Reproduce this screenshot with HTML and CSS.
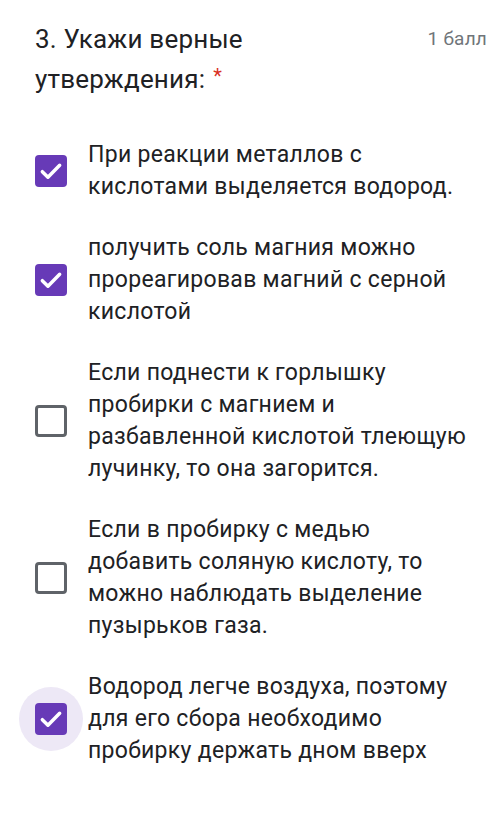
FILE: index.html
```html
<!DOCTYPE html>
<html lang="ru">
<head>
    <meta charset="UTF-8">
    <meta name="viewport" content="width=device-width, initial-scale=1.0">
    <title>Вопрос 3</title>
    <link rel="stylesheet" href="styles.css">
</head>
<body>
    <div class="question">
        <div class="question-head">
            <div class="question-title">3. Укажи верные утверждения:<span class="required">*</span></div>
            <div class="points">1 балл</div>
        </div>
        <div class="options">
            <label class="option">
                <span class="box checked">
                    <svg viewBox="0 0 24 24"><path d="M5.5 12.5l4.2 4.2 8.8-9"/></svg>
                </span>
                <span class="option-text">При реакции металлов с кислотами выделяется водород.</span>
            </label>
            <label class="option">
                <span class="box checked">
                    <svg viewBox="0 0 24 24"><path d="M5.5 12.5l4.2 4.2 8.8-9"/></svg>
                </span>
                <span class="option-text">получить соль магния можно прореагировав магний с серной кислотой</span>
            </label>
            <label class="option">
                <span class="box"></span>
                <span class="option-text">Если поднести к горлышку пробирки с магнием и разбавленной кислотой тлеющую лучинку, то она загорится.</span>
            </label>
            <label class="option">
                <span class="box"></span>
                <span class="option-text">Если в пробирку с медью добавить соляную кислоту, то можно наблюдать выделение пузырьков газа.</span>
            </label>
            <label class="option">
                <span class="box checked focused">
                    <svg viewBox="0 0 24 24"><path d="M5.5 12.5l4.2 4.2 8.8-9"/></svg>
                </span>
                <span class="option-text">Водород легче воздуха, поэтому для его сбора необходимо пробирку держать дном вверх</span>
            </label>
        </div>
    </div>
</body>
</html>
```

FILE: styles.css
```css
body {
    margin: 0;
    background-color: #fff;
    font-family: Roboto, "Noto Sans", Arial, sans-serif;
    color: #202124;
}
.question {
    padding: 19px 13px 40px 35px;
}
.question-head {
    display: flex;
    justify-content: space-between;
    align-items: flex-start;
    gap: 20px;
}
.question-title {
    font-size: 26px;
    line-height: 40px;
    letter-spacing: 0.2px;
    width: 260px;
}
.required {
    color: #d93025;
    font-size: 20px;
    line-height: 20px;
    margin-left: 8px;
    vertical-align: 5px;
}
.points {
    font-size: 19px;
    line-height: 40px;
    letter-spacing: 0.2px;
    color: #70757a;
    white-space: nowrap;
}
.options {
    display: flex;
    flex-direction: column;
    gap: 29px;
    margin-top: 40px;
    padding-right: 15px;
}
.option {
    display: flex;
    align-items: center;
    gap: 21px;
}
.option-text {
    font-size: 23px;
    line-height: 32px;
    letter-spacing: 0.3px;
    flex: 1;
}
.box {
    position: relative;
    flex: none;
    width: 32px;
    height: 32px;
    box-sizing: border-box;
    border: 3px solid #5f6368;
    border-radius: 4px;
}
.box.checked {
    border: none;
    background-color: #673ab7;
}
.box svg {
    position: relative;
    z-index: 1;
    display: block;
    width: 32px;
    height: 32px;
    fill: none;
    stroke: #fff;
    stroke-width: 2.6;
    stroke-linecap: round;
    stroke-linejoin: round;
}
.box.focused::before {
    content: "";
    position: absolute;
    left: -16px;
    top: -16px;
    width: 64px;
    height: 64px;
    border-radius: 50%;
    background-color: #ede8f6;
}
.box.focused::after {
    content: "";
    position: absolute;
    inset: 0;
    border-radius: 4px;
    background-color: #673ab7;
}
```
